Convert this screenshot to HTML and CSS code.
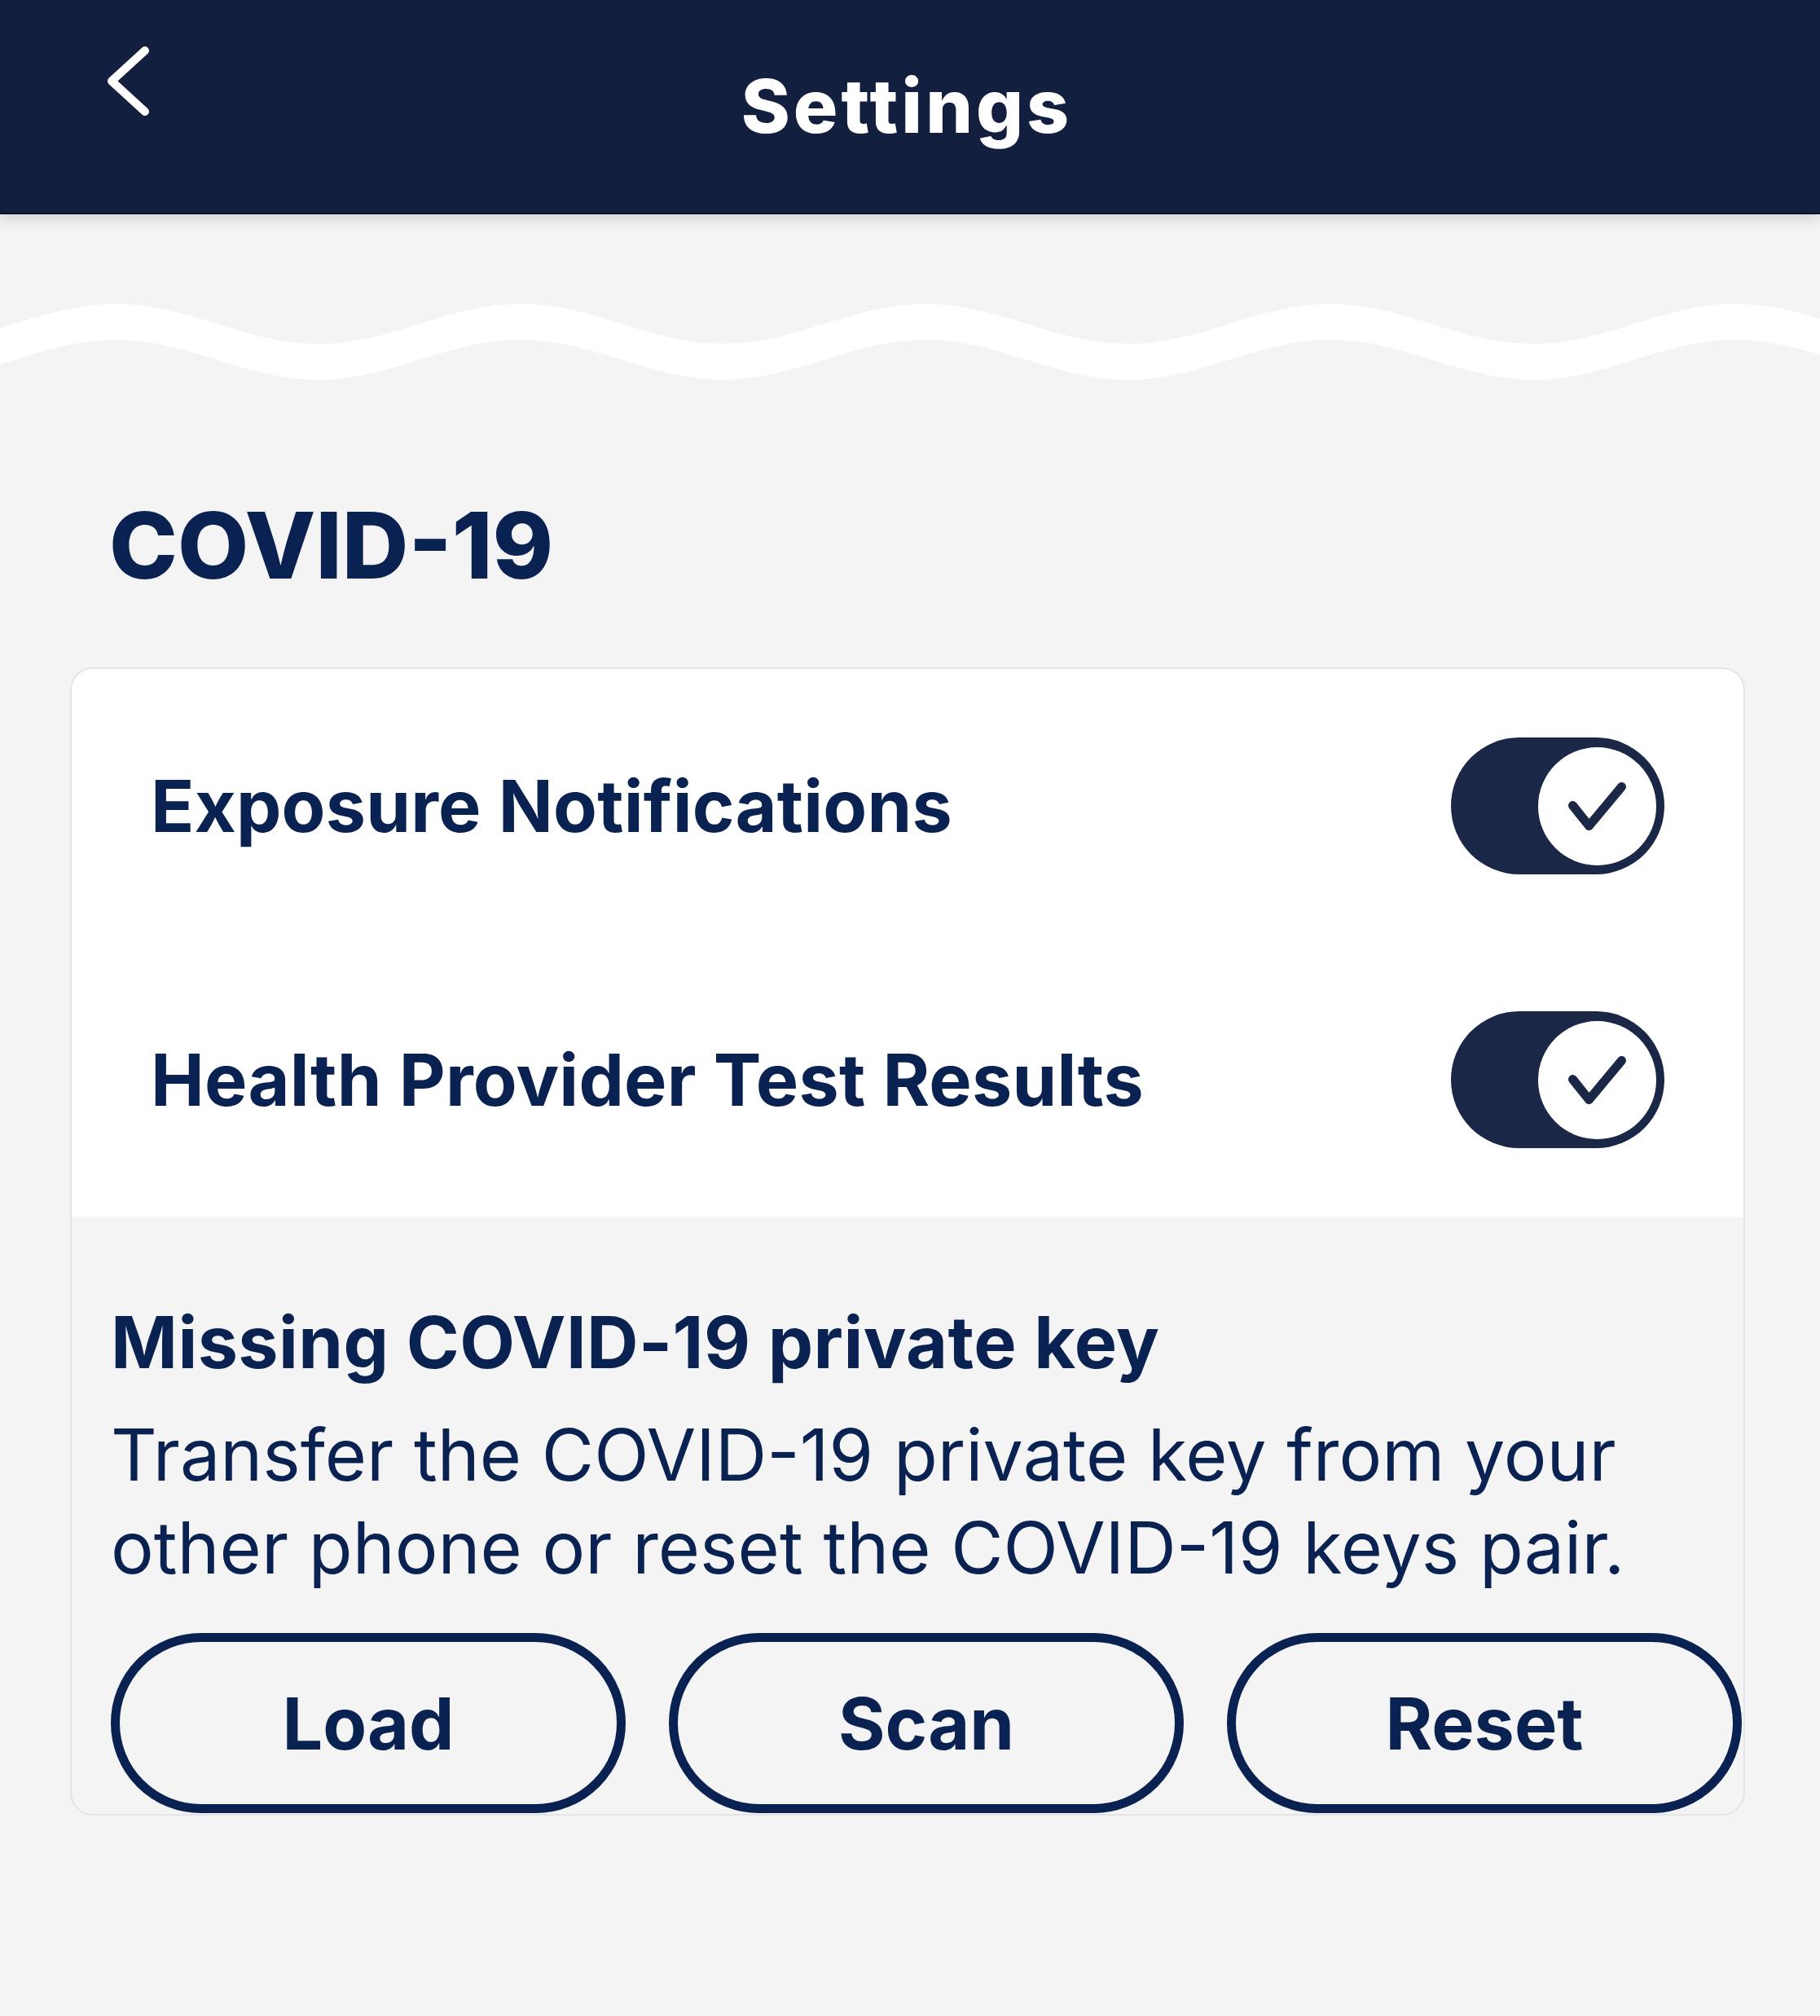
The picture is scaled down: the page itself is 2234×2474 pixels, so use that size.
FILE: index.html
```html
<!DOCTYPE html>
<html lang="en">
<head>
<meta charset="utf-8">
<title>Settings</title>
<link rel="stylesheet" href="styles.css">
</head>
<body>
<header class="topbar">
  <div class="topbar-left">
    <button class="back" aria-label="Back">
      <svg width="60" height="100" viewBox="0 0 60 100"><polyline points="50,12 9,49.5 50,87" fill="none" stroke="#ffffff" stroke-width="10" stroke-linecap="round" stroke-linejoin="round"/></svg>
    </button>
  </div>
  <h1 class="title">Settings</h1>
  <div class="topbar-right"></div>
</header>

<div class="wave">
  <svg width="2234" height="120" viewBox="0 0 2234 120" preserveAspectRatio="none">
    <path fill="#ffffff" d="M -355 13 C -264.4 13 -197.1 62 -106.5 62 S 51.4 13 142 13 S 299.9 62 390.5 62 S 548.4 13 639 13 S 796.9 62 887.5 62 S 1045.4 13 1136 13 S 1293.9 62 1384.5 62 S 1542.4 13 1633 13 S 1790.9 62 1881.5 62 S 2039.4 13 2130 13 S 2287.9 62 2378.5 62 L 2378.5 106 C 2287.9 106 2220.6 57 2130 57 S 1972.1 106 1881.5 106 S 1723.6 57 1633 57 S 1475.1 106 1384.5 106 S 1226.6 57 1136 57 S 978.1 106 887.5 106 S 729.6 57 639 57 S 481.1 106 390.5 106 S 232.6 57 142 57 S -15.9 106 -106.5 106 S -264.4 57 -355 57 Z"/>
  </svg>
</div>

<main class="content">
  <h2 class="section-title">COVID-19</h2>
  <section class="card">
    <div class="card-top">
      <div class="row">
        <span class="row-label">Exposure Notifications</span>
        <span class="toggle"><span class="knob"><svg width="145" height="145" viewBox="-72.5 -72.5 145 145"><polyline points="-30,-1 -10,24 30,-24" fill="none" stroke="#1a2747" stroke-width="11" stroke-linecap="round" stroke-linejoin="round"/></svg></span></span>
      </div>
      <div class="row">
        <span class="row-label">Health Provider Test Results</span>
        <span class="toggle"><span class="knob"><svg width="145" height="145" viewBox="-72.5 -72.5 145 145"><polyline points="-30,-1 -10,24 30,-24" fill="none" stroke="#1a2747" stroke-width="11" stroke-linecap="round" stroke-linejoin="round"/></svg></span></span>
      </div>
    </div>
    <div class="card-bottom">
      <h3 class="notice-title">Missing COVID-19 private key</h3>
      <p class="notice-text">Transfer the COVID-19 private key from your<br>other phone or reset the COVID-19 keys pair.</p>
      <div class="actions">
        <button class="pill">Load</button>
        <button class="pill">Scan</button>
        <button class="pill">Reset</button>
      </div>
    </div>
  </section>
</main>
</body>
</html>
```

FILE: styles.css
```css
* { box-sizing: border-box; }

html, body {
  margin: 0;
  padding: 0;
}

body {
  background: #f4f4f4;
  font-family: "Inter", "Liberation Sans", sans-serif;
  color: #0a2251;
  width: 2234px;
  min-height: 2474px;
}

.topbar {
  position: relative;
  z-index: 2;
  height: 263px;
  background: #131f3f;
  border-bottom: 2px solid #06112c;
  box-shadow: 0 5px 16px rgba(0, 0, 0, 0.16);
  display: grid;
  grid-template-columns: 1fr auto 1fr;
}

.topbar-left {
  padding: 50px 0 0 128px;
}

.back {
  display: block;
  width: 60px;
  height: 100px;
  padding: 0;
  margin: 0;
  border: 0;
  background: none;
}

.back svg { display: block; }

.title {
  margin: 0 0 0 -8px;
  font-size: 91px;
  font-weight: 800;
  line-height: 261px;
  letter-spacing: 4px;
  color: #ffffff;
}

.wave {
  margin-top: 97px;
  height: 120px;
}

.wave svg { display: block; }

.content {
  padding-left: 86px;
}

.section-title {
  margin: 119px 0 80px 48px;
  font-size: 113px;
  font-weight: 800;
  line-height: 140px;
  letter-spacing: 0;
  color: #0a2251;
}

.card {
  width: 2056px;
  border: 2px solid #e1e4e9;
  border-radius: 28px;
  overflow: hidden;
  background: #f4f4f4;
}

.card-top {
  background: #ffffff;
}

.row {
  height: 336px;
  display: flex;
  align-items: center;
  justify-content: space-between;
  padding: 0 97px 0 97px;
}

.row-label {
  font-size: 88px;
  font-weight: 700;
  line-height: 110px;
  letter-spacing: 0.2px;
  color: #0a2251;
}

.toggle {
  flex-shrink: 0;
  width: 262px;
  height: 168px;
  border-radius: 84px;
  background: #1a2747;
  display: flex;
  align-items: center;
  justify-content: flex-end;
  padding-right: 10px;
}

.knob {
  width: 145px;
  height: 145px;
  border-radius: 50%;
  background: #ffffff;
  display: block;
}

.knob svg { display: block; }

.card-bottom {
  padding: 99px 2px 1px 48px;
}

.notice-title {
  margin: 0;
  font-size: 88px;
  font-weight: 700;
  line-height: 110px;
  letter-spacing: 0.4px;
  color: #0a2251;
}

.notice-text {
  margin: 26px 0 0 0;
  font-size: 88px;
  font-weight: 400;
  line-height: 114px;
  color: #0a2251;
}

.actions {
  margin-top: 48px;
  display: grid;
  grid-template-columns: repeat(3, 1fr);
  column-gap: 53px;
}

.pill {
  height: 221px;
  border: 11px solid #0a2251;
  border-radius: 999px;
  background: transparent;
  font-family: "Inter", "Liberation Sans", sans-serif;
  font-size: 88px;
  font-weight: 700;
  line-height: 1;
  color: #0a2251;
  padding: 0;
}
```
